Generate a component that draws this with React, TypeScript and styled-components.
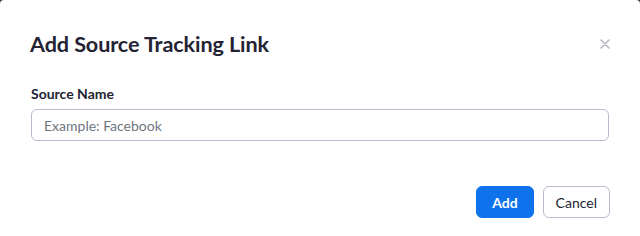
import React from "react";
import styled, { createGlobalStyle } from "styled-components";

const GlobalStyle = createGlobalStyle`
  html, body {
    margin: 0;
    padding: 0;
    background: #3a3a3a;
  }
  body {
    font-family: Lato, "Open Sans", sans-serif;
  }
`;

const Modal = styled.div`
  width: 640px;
  height: 236px;
  background: #ffffff;
  border-radius: 4px 4px 0 0;
  box-sizing: border-box;
  padding: 30px 30px 0 31px;
  display: flex;
  flex-direction: column;
`;

const Header = styled.div`
  display: flex;
  align-items: center;
  justify-content: space-between;
  height: 28px;
`;

const Title = styled.h2`
  margin: 0 0 0 -1px;
  font-size: 21.6px;
  font-weight: 700;
  color: #232333;
  letter-spacing: -0.1px;
`;

const CloseButton = styled.button`
  border: none;
  background: none;
  padding: 0;
  margin-right: -2px;
  width: 14px;
  height: 14px;
  display: flex;
  align-items: center;
  justify-content: center;
  cursor: pointer;
`;

const Field = styled.div`
  margin-top: 27px;
  display: flex;
  flex-direction: column;
  margin-right: 1px;
`;

const Label = styled.label`
  font-size: 14px;
  font-weight: 700;
  color: #232333;
  line-height: 18px;
  margin-bottom: 6px;
`;

const Input = styled.input`
  height: 32px;
  box-sizing: border-box;
  border: 1px solid #babacc;
  border-radius: 6px;
  padding: 0 12px;
  font-family: Lato, "Open Sans", sans-serif;
  font-size: 14px;
  color: #232333;
  outline: none;

  &::placeholder {
    color: #6e7680;
  }
`;

const Footer = styled.div`
  margin-top: 45px;
  display: flex;
  justify-content: flex-end;
  gap: 9px;
  margin-right: 0;
`;

const Button = styled.button<{ $primary?: boolean }>`
  height: 32px;
  box-sizing: border-box;
  padding: 0 ${(p) => (p.$primary ? "15px" : "12px")};
  border-radius: 6px;
  font-family: Lato, "Open Sans", sans-serif;
  font-size: 14px;
  font-weight: ${(p) => (p.$primary ? 700 : 400)};
  border: 1px solid ${(p) => (p.$primary ? "#0e72ed" : "#babacc")};
  background: ${(p) => (p.$primary ? "#0e72ed" : "#ffffff")};
  color: ${(p) => (p.$primary ? "#ffffff" : "#232333")};
  cursor: pointer;
`;

export default function App() {
  return (
    <>
      <GlobalStyle />
      <Modal>
        <Header>
          <Title>Add Source Tracking Link</Title>
          <CloseButton aria-label="Close">
            <svg width="10" height="10" viewBox="0 0 10 10">
              <path d="M1 1L9 9M9 1L1 9" stroke="#b8b8c2" strokeWidth="1.6" strokeLinecap="round" />
            </svg>
          </CloseButton>
        </Header>
        <Field>
          <Label>Source Name</Label>
          <Input placeholder="Example: Facebook" />
        </Field>
        <Footer>
          <Button $primary>Add</Button>
          <Button>Cancel</Button>
        </Footer>
      </Modal>
    </>
  );
}
